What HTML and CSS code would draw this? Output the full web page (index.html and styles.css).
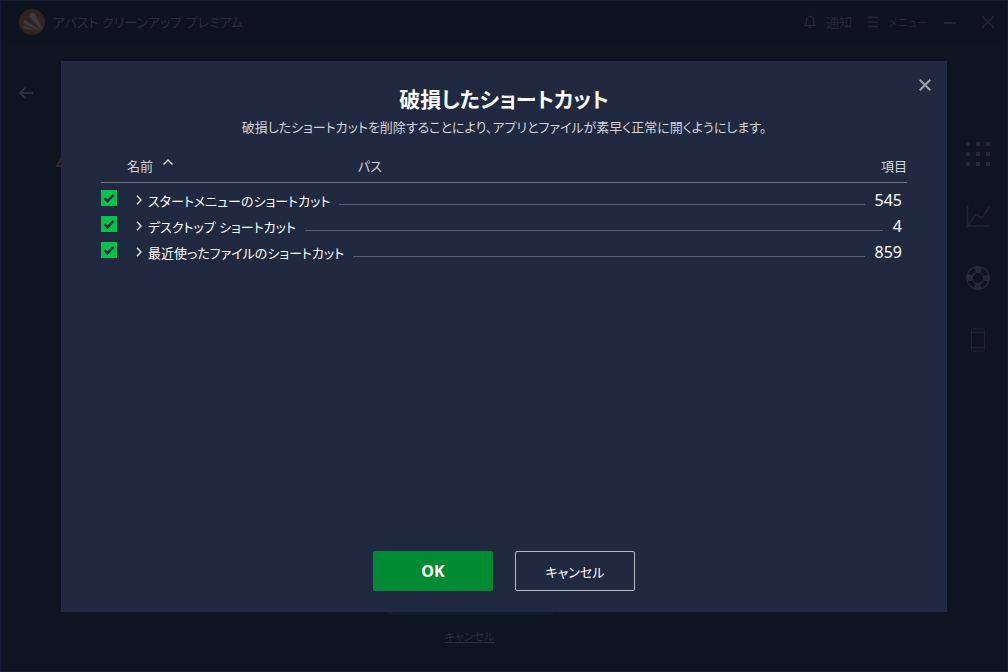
FILE: index.html
```
<!DOCTYPE html>
<html lang="ja">

<head>
	<meta charset="UTF-8">
	<meta name="viewport" content="width=device-width, initial-scale=1">
	<title>アバスト クリーンアップ プレミアム</title>
	<link rel="stylesheet" href="styles.css">
</head>

<body>
	<div class="app">
		<header class="topbar">
			<svg class="logo" viewBox="0 0 26 26">
				<circle cx="13" cy="13" r="13" fill="#34221f" />
				<path d="M10.500 7.800C9 4.500 13.800 1.800 16 5.200L23.400 19.200C23.800 20.600 22.800 21.200 21.800 20.200Z" fill="#383b44" />
				<path d="M5 14.600C3.400 12.800 5.600 10.400 7.600 11.800L19.500 20.600C18.800 21.200 17.800 21 17 20.600Z" fill="#383b44" />
				<path d="M5 19.400C3 18.600 3.800 16 6 16.600L14.500 20.200C14 20.800 13 20.900 12 20.800Z" fill="#383b44" />
			</svg>
			<span class="app-name">アバスト クリーンアップ プレミアム</span>
			<button class="top-item" type="button">
				<svg width="12" height="14" viewBox="0 0 12 14">
					<path d="M1 10.500C2.500 9 2.500 8 2.500 5.500C2.500 3 4 1.500 6 1.500S9.500 3 9.500 5.500C9.500 8 9.500 9 11 10.500Z" />
					<path d="M4.500 12.500h3" />
				</svg>
				通知
			</button>
			<button class="top-item menu" type="button">
				<svg width="10" height="12" viewBox="0 0 10 12">
					<path d="M0 1.500h10M0 6h10M0 10.500h10" />
				</svg>
				メニュー
			</button>
			<button class="win-btn" type="button" aria-label="最小化">
				<svg width="12" height="12" viewBox="0 0 12 12">
					<path d="M0 7h12" stroke-width="2" />
				</svg>
			</button>
			<button class="win-btn" type="button" aria-label="閉じる">
				<svg width="12" height="12" viewBox="0 0 12 12">
					<path d="M.500 .500l11 11M11.500 .500l-11 11" stroke-width="1.500" />
				</svg>
			</button>
		</header>

		<div class="content">
			<main class="page">
				<button class="back" type="button" aria-label="戻る">
					<svg width="14" height="12" viewBox="0 0 14 12">
						<path d="M14 6H1M6.500 .800L1 6l5.500 5.200" />
					</svg>
				</button>
				<svg class="warning" width="32" height="28" viewBox="0 0 32 28">
					<path d="M16 2L2 26h28Z" />
				</svg>
				<div class="page-actions">
					<button class="fix" type="button" aria-label="解決する"></button>
					<a href="#">キャンセル</a>
				</div>
			</main>
			<nav class="sidebar">
				<a href="#" aria-label="すべての機能">
					<svg viewBox="0 0 24 24" fill="#262a36">
						<path d="M0 0h4v4H0zM10 0h4v4h-4zM20 0h4v4h-4zM0 10h4v4H0zM10 10h4v4h-4zM20 10h4v4h-4zM0 20h4v4H0zM10 20h4v4h-4zM20 20h4v4h-4z" />
					</svg>
				</a>
				<a href="#" aria-label="統計">
					<svg viewBox="0 0 24 24" fill="none" stroke="#202430" stroke-width="1.500">
						<path d="M1.500 1v23M0 22h24" />
						<path d="M2 21L10 10.500L16 14L23.500 2.500" />
					</svg>
				</a>
				<a href="#" aria-label="ヘルプ">
					<svg viewBox="0 0 24 24" fill="none" stroke="#262a36">
						<circle cx="12" cy="12" r="11.300" stroke-width="1.400" />
						<circle cx="12" cy="12" r="5.800" stroke-width="1.400" />
						<circle cx="12" cy="12" r="8.500" stroke-width="6" stroke-dasharray="6.400 6.950" stroke-dashoffset="3.200" />
					</svg>
				</a>
				<a href="#" aria-label="モバイル">
					<svg viewBox="0 0 24 24" fill="none" stroke="#202430" stroke-width="1.300">
						<rect x="5.500" y=".700" width="13" height="22.600" rx="1.500" />
						<path d="M5.500 4.500h13M5.500 19.500h13" />
					</svg>
				</a>
			</nav>
		</div>
	</div>

	<div class="dialog" role="dialog" aria-labelledby="dialog-title">
		<button class="close" type="button" aria-label="閉じる">
			<svg width="12" height="12" viewBox="0 0 12 12">
				<path d="M.700 .700l10.600 10.600M11.300 .700L.700 11.300" />
			</svg>
		</button>
		<h1 id="dialog-title">破損したショートカット</h1>
		<p>破損したショートカットを削除することにより、アプリとファイルが素早く正常に開くようにします。</p>

		<table>
			<thead>
				<tr>
					<th class="col-name">
						名前
						<svg width="10" height="6" viewBox="0 0 10 6">
							<path d="M.500 5.500L5 1l4.500 4.500" />
						</svg>
					</th>
					<th class="col-path">パス</th>
					<th>項目</th>
				</tr>
			</thead>
			<tbody>
				<tr>
					<td class="check"><input type="checkbox" id="start-menu" checked></td>
					<td class="name">
						<svg width="6" height="10" viewBox="0 0 6 10">
							<path d="M1 .800L5 5L1 9.200" />
						</svg>
						<label for="start-menu">スタートメニューのショートカット</label>
					</td>
					<td class="count">545</td>
				</tr>
				<tr>
					<td class="check"><input type="checkbox" id="desktop" checked></td>
					<td class="name">
						<svg width="6" height="10" viewBox="0 0 6 10">
							<path d="M1 .800L5 5L1 9.200" />
						</svg>
						<label for="desktop">デスクトップ ショートカット</label>
					</td>
					<td class="count">4</td>
				</tr>
				<tr>
					<td class="check"><input type="checkbox" id="recent" checked></td>
					<td class="name">
						<svg width="6" height="10" viewBox="0 0 6 10">
							<path d="M1 .800L5 5L1 9.200" />
						</svg>
						<label for="recent">最近使ったファイルのショートカット</label>
					</td>
					<td class="count">859</td>
				</tr>
			</tbody>
		</table>

		<div class="buttons">
			<button class="btn ok" type="button">OK</button>
			<button class="btn" type="button">キャンセル</button>
		</div>
	</div>
</body>

</html>
```
FILE: styles.css
```
* {
	box-sizing: border-box;
}

body {
	margin: 0;
	background: #0e1420;
	color: #fff;
	font-family: "Noto Sans", "Noto Sans CJK JP", sans-serif;
	font-size: 13px;
	font-feature-settings: "palt";
}

button {
	padding: 0;
	border: 0;
	background: none;
	color: inherit;
	font: inherit;
	font-feature-settings: inherit;
}

svg {
	display: block;
	flex: none;
}

/* window behind the dialog */

.app {
	display: flex;
	flex-direction: column;
	min-height: 100vh;
	border: 1px solid #191c36;
	color: #2b2f3a;
}

.topbar {
	display: flex;
	align-items: center;
	height: 41px;
	padding: 0 13px 0 18px;
	background: #0e1320;
}

.topbar svg {
	fill: none;
	stroke: #242834;
	stroke-width: 1.3;
}

.topbar .logo {
	width: 26px;
	height: 26px;
	margin-right: 8px;
	stroke: none;
}

.app-name {
	margin-right: auto;
}

.top-item {
	display: flex;
	align-items: center;
	gap: 10px;
	margin-right: 16px;
	color: #242834;
}

.menu {
	font-size: 11px;
}

.win-btn {
	margin-left: 26px;
}

.menu+.win-btn {
	margin-left: 0;
}

.content {
	display: flex;
	flex: 1;
}

.page {
	display: flex;
	flex: 1;
	flex-direction: column;
	padding: 45px 10px 24px 18px;
}

.page svg {
	fill: none;
	stroke: #2e3039;
	stroke-width: 2;
}

.back {
	align-self: flex-start;
}

.page .warning {
	margin: 41px 0 0 36px;
	stroke: #302d20;
}

.page-actions {
	display: flex;
	flex-direction: column;
	align-items: center;
	gap: 12px;
	margin-top: auto;
	padding-right: 18px;
}

.fix {
	width: 166px;
	height: 40px;
	border-radius: 2px;
	background: #0b2022;
}

.page-actions a {
	color: #2b2f3a;
	font-size: 11px;
	line-height: 20px;
}

.sidebar {
	width: 59px;
	padding-top: 81px;
}

.sidebar a {
	display: flex;
	align-items: center;
	justify-content: center;
	height: 62px;
}

.sidebar svg {
	width: 24px;
	height: 24px;
}

/* dialog */

.dialog {
	position: absolute;
	inset: 61px 61px 60px;
	display: flex;
	flex-direction: column;
	padding: 23px 40px 21px;
	background: #212940;
}

.close {
	position: absolute;
	top: 18px;
	right: 16px;
}

.close svg {
	fill: none;
	stroke: #9fa2ac;
	stroke-width: 2;
}

h1 {
	margin: 0;
	font-size: 21px;
	line-height: 30px;
	text-align: center;
}

p {
	margin: 0;
	color: #d3d4d9;
	font-size: 13px;
	line-height: 26px;
	text-align: center;
}

table,
thead,
tbody {
	display: block;
}

thead {
	margin-top: 11px;
	border-bottom: 1px solid #6f7482;
}

tr {
	display: flex;
	align-items: center;
	height: 26px;
}

thead tr {
	height: 31px;
}

tbody {
	padding-top: 4px;
}

th,
td {
	padding: 0;
}

th {
	padding-bottom: 2px;
	color: #d3d4d9;
	font-weight: normal;
	text-align: left;
}

.col-name {
	display: flex;
	gap: 10px;
	width: 257px;
	padding-left: 26px;
}

.col-name svg {
	margin-top: 3px;
}

.col-path {
	flex: 1;
}

table svg {
	fill: none;
	stroke: #e4e5e9;
	stroke-width: 1.4;
}

.check {
	width: 35px;
	height: 20px;
}

input {
	display: block;
	width: 16px;
	height: 16px;
	margin: 0;
	appearance: none;
	background: #04c24a url('data:image/svg+xml,<svg xmlns="http://www.w3.org/2000/svg" viewBox="0 0 16 16"><path d="M3.500 8.200l3 3 6-6.200" fill="none" stroke="%23212940" stroke-width="2.400"/></svg>');
}

.name {
	display: flex;
	flex: 1;
	align-items: center;
	gap: 6px;
}

/* leader between the name and the count */
.name::after {
	content: "";
	flex: 1;
	height: 1px;
	margin: 8px 0 0 3px;
	background: #596075;
}

.count {
	padding: 0 5px 0 10px;
	font-size: 16px;
	line-height: 20px;
}

.buttons {
	display: flex;
	justify-content: center;
	gap: 22px;
	margin-top: auto;
}

.btn {
	width: 120px;
	height: 40px;
	border: 1px solid #b6b9c2;
	border-radius: 2px;
}

.ok {
	border: 0;
	background: #008a32;
	font-size: 16px;
	font-weight: bold;
}
```
